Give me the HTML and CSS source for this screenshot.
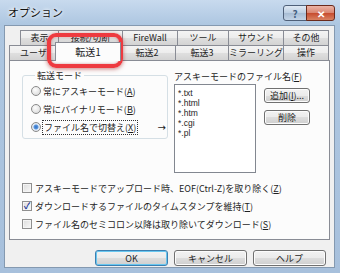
FILE: index.html
```html
<!DOCTYPE html>
<html lang="ja">

<head>
    <meta charset="UTF-8">
    <title>オプション</title>
    <link rel="stylesheet" href="styles.css">
</head>

<body>
    <div class="window">
        <div class="titlebar">
            <span class="title">オプション</span>
            <div class="caption-btns">
                <span class="cbtn help">?</span>
                <span class="cbtn close">✕</span>
            </div>
        </div>

        <div class="client">
            <!-- タブ -->
            <div class="tabs">
                <div class="tab-row back">
                    <span class="tab">表示</span>
                    <span class="tab">接続/切断</span>
                    <span class="tab">FireWall</span>
                    <span class="tab">ツール</span>
                    <span class="tab">サウンド</span>
                    <span class="tab">その他</span>
                </div>
                <div class="tab-row front">
                    <span class="tab">ユーザ</span>
                    <span class="tab active">転送1</span>
                    <span class="tab">転送2</span>
                    <span class="tab">転送3</span>
                    <span class="tab">ミラーリング</span>
                    <span class="tab">操作</span>
                </div>
            </div>

            <div class="panel">
                <div class="top-area">
                    <fieldset class="group">
                        <legend>転送モード</legend>
                        <label class="radio"><span class="rb"></span>常にアスキーモード(<u>A</u>)</label>
                        <label class="radio"><span class="rb"></span>常にバイナリモード(<u>B</u>)</label>
                        <label class="radio"><span class="rb on"></span><span class="focus">ファイル名で切替え(<u>X</u>)</span><span class="arrow">→</span></label>
                    </fieldset>

                    <div class="files">
                        <div class="files-label">アスキーモードのファイル名(<u>F</u>)</div>
                        <div class="files-body">
                            <div class="listbox">
                                <div>*.txt</div>
                                <div>*.html</div>
                                <div>*.htm</div>
                                <div>*.cgi</div>
                                <div>*.pl</div>
                            </div>
                            <div class="side-btns">
                                <button class="btn small">追加(<u>I</u>)...</button>
                                <button class="btn small">削除</button>
                            </div>
                        </div>
                    </div>
                </div>

                <div class="checks">
                    <label class="check"><span class="cb"></span>アスキーモードでアップロード時、EOF(Ctrl-Z)を取り除く(<u>Z</u>)</label>
                    <label class="check"><span class="cb on">✓</span>ダウンロードするファイルのタイムスタンプを維持(<u>T</u>)</label>
                    <label class="check"><span class="cb"></span>ファイル名のセミコロン以降は取り除いてダウンロード(<u>S</u>)</label>
                </div>
            </div>

            <div class="buttons">
                <button class="btn default">OK</button>
                <button class="btn">キャンセル</button>
                <button class="btn">ヘルプ</button>
            </div>
        </div>

        <!-- 赤い枠 -->
        <div class="highlight"></div>
    </div>
</body>

</html>
```

FILE: styles.css
```css
* {
    box-sizing: border-box;
}

body {
    margin: 0;
    font-family: "Noto Sans CJK JP", "Noto Sans", sans-serif;
    font-size: 9px;
    color: #1e1e1e;
}

.window {
    width: 340px;
    height: 273px;
    position: relative;
    overflow: hidden;
    display: flex;
    flex-direction: column;
    background: linear-gradient(180deg, #c8daee 0, #aec7e1 24px, #a7c0dc 100%);
}

.titlebar {
    height: 25px;
    flex-shrink: 0;
    display: flex;
    justify-content: space-between;
    align-items: flex-start;
    padding: 5px 5px 0 8px;
}

.title {
    font-size: 11px;
    line-height: 15px;
    color: #111;
    text-shadow: 0 0 5px #fff, 0 0 3px #fff;
}

.caption-btns {
    display: flex;
}

.cbtn {
    height: 16px;
    display: flex;
    align-items: center;
    justify-content: center;
    font-weight: bold;
    font-size: 10px;
    border: 1px solid #4f6079;
}

    .cbtn.help {
        width: 24px;
        border-radius: 3px 0 0 3px;
        color: #44607f;
        background: linear-gradient(#dfe9f4, #bccee2 50%, #a6bbd3 50%, #c3d4e7);
    }

    .cbtn.close {
        width: 29px;
        margin-left: -1px;
        border-radius: 0 3px 3px 0;
        color: #fff;
        border-color: #6a2a1c;
        background: linear-gradient(#ecb4a6, #d9846f 50%, #c64a2d 50%, #d98262);
    }

.client {
    flex: 1;
    margin: 0 5px 5px 4px;
    background: #f0f0f0;
    border: 1px solid #8499b0;
    padding: 4px 4px 0 4px;
    display: flex;
    flex-direction: column;
}

/* タブ */
.tab-row {
    display: flex;
    height: 15px;
}

    .tab-row.back {
        padding-left: 11px;
    }

.tab {
    height: 15px;
    margin-left: -1px;
    border: 1px solid #898c95;
    border-bottom: none;
    text-align: center;
    line-height: 13px;
    background: linear-gradient(#f4f4f4, #ececec 50%, #dfdfdf 50%, #d3d3d3);
}

    .tab:first-child {
        margin-left: 0;
    }

.back .tab:nth-child(1) { width: 39px; }
.back .tab:nth-child(2) { width: 65px; }
.back .tab:nth-child(3) { width: 56px; }
.back .tab:nth-child(4) { width: 52px; }
.back .tab:nth-child(5) { width: 56px; }
.back .tab:nth-child(6) { width: 46px; }

.front .tab:nth-child(1) { width: 49px; }
.front .tab:nth-child(3) { width: 58px; }
.front .tab:nth-child(4) { width: 54px; }
.front .tab:nth-child(5) { width: 56px; }
.front .tab:nth-child(6) { width: 46px; }

.tab.active {
    width: 66px;
    height: 19px;
    margin: -3px -2px 0 -3px;
    position: relative;
    z-index: 1;
    background: #fcfcfc;
    line-height: 17px;
    font-size: 10px;
}

.panel {
    height: 180px;
    background: #fcfcfc;
    border: 1px solid #898c95;
    padding: 9px 10px 0 12px;
}

.top-area {
    display: flex;
    align-items: flex-start;
}

.group {
    width: 146px;
    margin: 0;
    padding: 1px 1px 2px 8px;
    border: 1px solid #d5dfe5;
    border-radius: 3px;
}

    .group legend {
        padding: 0 2px;
        margin-left: 4px;
        line-height: 11px;
    }

.radio {
    display: flex;
    align-items: center;
    height: 18px;
}

.rb {
    width: 10px;
    height: 10px;
    margin-right: 2px;
    border-radius: 50%;
    border: 1px solid #8a8a8a;
    background: radial-gradient(circle at 40% 35%, #fdfdfd, #d4d4d4);
}

    .rb.on {
        background: radial-gradient(circle, #2f6fc2 0, #5a96de 2px, #e6eef8 3px, #d8d8d8 5px);
    }

.focus {
    outline: 1px dotted #333;
    outline-offset: 0;
    padding: 0 1px;
}

.arrow {
    margin-left: auto;
    font-family: "DejaVu Sans", sans-serif;
    font-size: 10px;
}

.files {
    margin-left: 6px;
}

.files-label {
    line-height: 11px;
    margin-top: 1px;
}

.files-body {
    display: flex;
    align-items: flex-start;
    margin-top: 2px;
}

.listbox {
    width: 82px;
    height: 89px;
    background: #fff;
    border: 1px solid #828790;
    padding: 3px 3px;
    font-family: "Liberation Sans", sans-serif;
    font-size: 8.5px;
    line-height: 10px;
}

.side-btns {
    display: flex;
    flex-direction: column;
    gap: 7px;
    margin: 4px 0 0 8px;
}

.btn {
    font-family: inherit;
    font-size: 9px;
    color: #1e1e1e;
    height: 16px;
    padding: 0;
    border: 1px solid #707070;
    border-radius: 3px;
    background: linear-gradient(#f2f2f2, #ebebeb 50%, #dddddd 50%, #cfcfcf);
    box-shadow: inset 0 0 0 1px #fcfcfc;
}

    .btn.small {
        width: 46px;
        height: 15px;
    }

.checks {
    margin-top: 6px;
}

.check {
    display: flex;
    align-items: center;
    height: 18px;
}

.cb {
    width: 10px;
    height: 10px;
    margin-right: 3px;
    border: 1px solid #8f8f8f;
    background: linear-gradient(135deg, #dcdcdc, #f8f8f8);
    box-shadow: inset 0 0 0 1px #f4f4f4;
    font-size: 9px;
    line-height: 8px;
    text-align: center;
    color: #22389a;
    font-weight: bold;
}

.buttons {
    display: flex;
    justify-content: flex-end;
    gap: 6px;
    padding: 10px 4px 0 0;
}

    .buttons .btn {
        width: 73px;
    }

.btn.default {
    border-color: #3c7fb1;
    box-shadow: inset 0 0 0 1px #68c7f0;
}

.highlight {
    position: absolute;
    left: 47px;
    top: 33px;
    width: 76px;
    height: 35px;
    border: 4px solid #ee3a40;
    border-radius: 9px;
    box-shadow: 0 1px 4px rgba(150, 0, 0, 0.5), inset 0 0 3px rgba(150, 0, 0, 0.4);
}
```
